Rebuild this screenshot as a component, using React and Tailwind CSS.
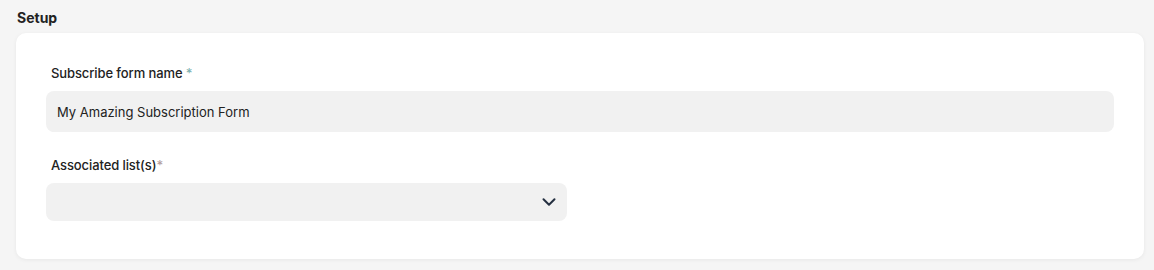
import { ChevronDown } from "lucide-react";

export default function App() {
  return (
    <div className="min-h-[270px] bg-[#f5f5f5] pl-4 pr-[10px] pt-[9px] font-['Inter','Noto_Sans',sans-serif] text-[#1f2933]">
      <h2 className="pl-px text-[14px] font-bold leading-[18px] text-[#222]">Setup</h2>
      <div className="mt-[6px] rounded-[10px] bg-white pl-[30px] pr-[30px] pt-[32px] pb-[38px] shadow-[0_1px_4px_rgba(0,0,0,0.06)]">
        <label className="block pl-[5px] text-[13px] font-medium leading-[16px] tracking-[-0.1px] text-[#222]">
          Subscribe form name <span className="text-[#7fb3b3]">*</span>
        </label>
        <input
          readOnly
          value="My Amazing Subscription Form"
          className="mt-[10px] h-[41px] w-full rounded-[8px] bg-[#f1f1f1] px-[11px] text-[13px] text-[#222] outline-none"
        />
        <label className="mt-[25px] block pl-[5px] text-[13px] font-medium leading-[16px] tracking-[-0.1px] text-[#222]">
          Associated list(s)<span className="text-[#b5a0a0]">*</span>
        </label>
        <div className="mt-[10px] flex h-[38px] w-[521px] items-center justify-end rounded-[8px] bg-[#f1f1f1] pr-[7px]">
          <ChevronDown className="h-[22px] w-[22px] text-[#253041]" strokeWidth={2.2} />
        </div>
      </div>
    </div>
  );
}
